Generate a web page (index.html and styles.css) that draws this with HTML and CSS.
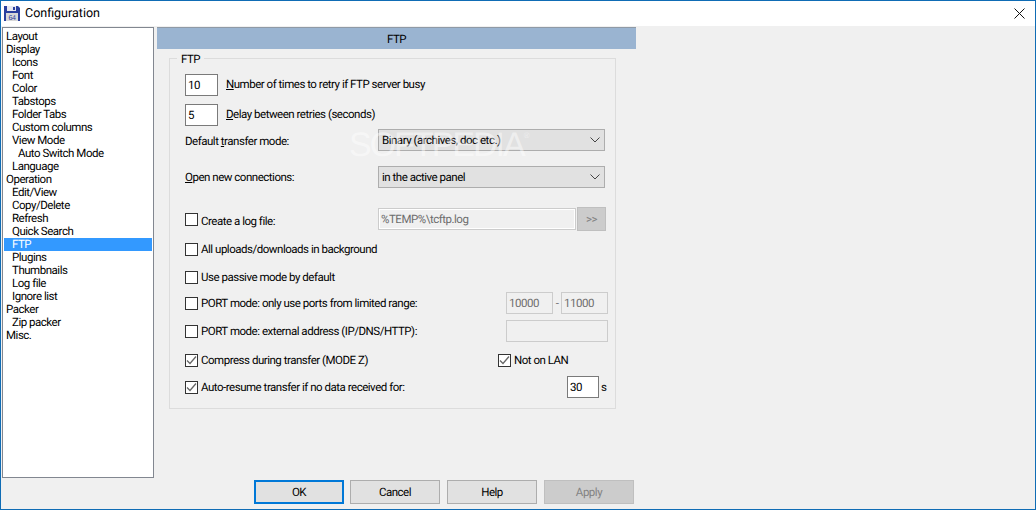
FILE: index.html
```html
<!DOCTYPE html>
<html>
<head>
<meta charset="utf-8">
<title>Configuration</title>
<link rel="stylesheet" href="styles.css">
</head>
<body>
<div class="window">
  <div class="titlebar">
    <svg class="appicon" width="16" height="16" viewBox="0 0 16 16">
      <path d="M0 1h14l2 2v13H0z" fill="#2a3f9e"/>
      <rect x="3" y="1" width="9" height="5" fill="#e8e8f0"/>
      <rect x="9" y="2" width="2" height="3" fill="#2a3f9e"/>
      <rect x="2" y="8" width="12" height="8" fill="#d8d8d8"/>
      <text x="8" y="15" font-size="7" text-anchor="middle" fill="#2a3f9e" font-family="Liberation Sans">64</text>
    </svg>
    <span class="title">Configuration</span>
    <svg class="close" width="11" height="11" viewBox="0 0 11 11"><path d="M.5.5l10 10M10.500.5l-10 10" stroke="#111" stroke-width="1" fill="none"/></svg>
  </div>
  <div class="content">
    <ul class="tree">
      <li>Layout</li>
      <li>Display</li>
      <li class="l1">Icons</li>
      <li class="l1">Font</li>
      <li class="l1">Color</li>
      <li class="l1">Tabstops</li>
      <li class="l1">Folder Tabs</li>
      <li class="l1">Custom columns</li>
      <li class="l1">View Mode</li>
      <li class="l2">Auto Switch Mode</li>
      <li class="l1">Language</li>
      <li>Operation</li>
      <li class="l1">Edit/View</li>
      <li class="l1">Copy/Delete</li>
      <li class="l1">Refresh</li>
      <li class="l1">Quick Search</li>
      <li class="l1 selected">FTP</li>
      <li class="l1">Plugins</li>
      <li class="l1">Thumbnails</li>
      <li class="l1">Log file</li>
      <li class="l1">Ignore list</li>
      <li>Packer</li>
      <li class="l1">Zip packer</li>
      <li>Misc.</li>
    </ul>
    <div class="pane">
      <div class="header">FTP</div>
      <div class="group">
        <div class="legend">FTP</div>
        <div class="row t0">
          <div class="input num">10</div>
          <span class="numlabel"><u>N</u>umber of times to retry if FTP server busy</span>
        </div>
        <div class="row t8">
          <div class="input num">5</div>
          <span class="numlabel"><u>D</u>elay between retries (seconds)</span>
        </div>
        <div class="row t3">
          <span class="lead nudge">Default <u>t</u>ransfer mode:</span>
          <div class="combo">Binary (archives, doc etc.)<svg class="chev" width="10" height="6" viewBox="0 0 10 6"><path d="M.5.500l4.500 4.500 4.500-4.500" stroke="#444" fill="none"/></svg></div>
        </div>
        <div class="row t15">
          <span class="lead"><u>O</u>pen new connections:</span>
          <div class="combo">in the active panel<svg class="chev" width="10" height="6" viewBox="0 0 10 6"><path d="M.5.500l4.500 4.500 4.500-4.500" stroke="#444" fill="none"/></svg></div>
        </div>
        <div class="row t20">
          <label class="check lead"><span class="box"></span><span class="low">Create a log file:</span></label>
          <div class="input off logfile">%TEMP%\tcftp.log</div>
          <div class="browse">&gt;&gt;</div>
        </div>
        <div class="row t8"><label class="check"><span class="box"></span>All uploads/downloads in background</label></div>
        <div class="row t6"><label class="check"><span class="box"></span>Use passive mode by default</label></div>
        <div class="row t4">
          <label class="check wide"><span class="box"></span>PORT mode: only use ports from limited range:</label>
          <div class="input off port">10000</div>
          <span class="dash">-</span>
          <div class="input off port">11000</div>
        </div>
        <div class="row t6">
          <label class="check wide"><span class="box"></span>PORT mode: external address (IP/DNS/HTTP):</label>
          <div class="input off address"></div>
        </div>
        <div class="row t7">
          <label class="check mid"><span class="box on"><svg width="11" height="11" viewBox="0 0 11 11"><path d="M1 5.500l3 3 6-7" stroke="#666" stroke-width="1.300" fill="none"/></svg></span>Compress during transfer (MODE Z)</label>
          <label class="check"><span class="box on"><svg width="11" height="11" viewBox="0 0 11 11"><path d="M1 5.500l3 3 6-7" stroke="#666" stroke-width="1.300" fill="none"/></svg></span>Not on LAN</label>
        </div>
        <div class="row t5">
          <label class="check long"><span class="box on"><svg width="11" height="11" viewBox="0 0 11 11"><path d="M1 5.500l3 3 6-7" stroke="#666" stroke-width="1.300" fill="none"/></svg></span>Auto-resume transfer if no data received for:</label>
          <div class="input secs">30</div>
          <span class="unit">s</span>
        </div>
      </div>
      <div class="mark">SOFTPEDIA<span class="reg">®</span></div>
    </div>
  </div>
  <div class="buttons">
    <div class="btn default">OK</div>
    <div class="btn">Cancel</div>
    <div class="btn">Help</div>
    <div class="btn disabled">Apply</div>
  </div>
</div>
</body>
</html>
```
FILE: styles.css
```css
* { box-sizing: border-box; }
html, body { margin: 0; padding: 0; }
body {
  width: 1036px;
  height: 510px;
  overflow: hidden;
  font-family: Roboto, "Liberation Sans", Arial, sans-serif;
  font-size: 11.500px;
  letter-spacing: -0.480px;
  text-rendering: geometricPrecision;
  color: #000;
}
.window {
  width: 1036px;
  height: 510px;
  background: #f0f0f0;
  border: 1px solid #0f6cb5;
  display: flex;
  flex-direction: column;
}
.titlebar {
  height: 25px;
  background: #fff;
  display: flex;
  align-items: center;
  padding: 0 10px 1px 3px;
  flex: none;
}
.appicon { margin-right: 5px; }
.title { font-size: 12.500px; letter-spacing: 0; flex: 1; }
.content {
  display: flex;
  flex: none;
  height: 451px;
  padding: 1px 0 0 1px;
}
.tree {
  list-style: none;
  margin: 0;
  padding: 2px 1px;
  width: 152px;
  height: 451px;
  background: #fff;
  border: 1px solid #828790;
  flex: none;
}
.tree li {
  height: 13px;
  line-height: 13px;
  padding-left: 2px;
  white-space: nowrap;
}
.tree .l1 { padding-left: 8px; }
.tree .l2 { padding-left: 14px; }
.tree .selected { background: #3399ff; color: #fff; }
.pane {
  position: relative;
  margin-left: 3px;
  width: 479px;
}
.header {
  height: 22px;
  background: #9ab4d1;
  border-top: 1px solid #8f9aa6;
  text-align: center;
  line-height: 22px;
}
.group {
  position: relative;
  margin: 9px 0 0 12px;
  width: 447px;
  height: 351px;
  border: 1px solid #dcdcdc;
  padding: 15px 0 0 15px;
}
.legend {
  position: absolute;
  top: -7px;
  left: 7px;
  padding: 0 4px;
  background: #f0f0f0;
  line-height: 14px;
}
.row {
  display: flex;
  align-items: center;
  height: 22px;
  white-space: nowrap;
}
.t0 { margin-top: 0; }
.t3 { margin-top: 3px; }
.t4 { margin-top: 4px; }
.t5 { margin-top: 5px; }
.t6 { margin-top: 6px; }
.t7 { margin-top: 7px; }
.t8 { margin-top: 8px; }
.t15 { margin-top: 15px; }
.t20 { margin-top: 20px; }
.input {
  height: 22px;
  line-height: 20px;
  background: #fff;
  border: 1px solid #7a7a7a;
  padding-left: 2px;
}
.num { width: 33px; }
.numlabel { margin-left: 8px; margin-bottom: 2px; }
.off {
  background: #f0f0f0;
  border: 1px solid #ccc;
  color: #6d6d6d;
}
.lead { width: 193px; flex: none; }
.low { padding-top: 3px; }
.nudge { padding-top: 1px; }
.combo {
  position: relative;
  width: 227px;
  height: 22px;
  line-height: 21px;
  background: #e1e1e1;
  border: 1px solid #adadad;
  padding-left: 3px;
}
.chev { position: absolute; right: 4px; top: 7px; }
.logfile { width: 198px; outline: 1px solid #fff; outline-offset: -2px; }
.browse {
  width: 29px;
  height: 24px;
  margin-left: 1px;
  background: #cccccc;
  border: 1px solid #bfbfbf;
  color: #838383;
  text-align: center;
  line-height: 22px;
}
.check { display: flex; align-items: center; }
.box {
  width: 13px;
  height: 13px;
  flex: none;
  background: #fff;
  border: 1px solid #333;
  margin-right: 3px;
  display: flex;
  align-items: center;
  justify-content: center;
}
.wide { width: 321px; flex: none; }
.port { width: 47px; }
.dash { width: 8px; text-align: center; color: #777; }
.address { width: 102px; }
.mid { width: 313px; flex: none; }
.long { width: 382px; flex: none; }
.secs { width: 32px; }
.unit { margin-left: 2px; }
.mark {
  position: absolute;
  left: 192px;
  top: 89px;
  font-family: "Liberation Sans", Arial, sans-serif;
  font-size: 34px;
  line-height: 40px;
  letter-spacing: -2px;
  color: rgba(255, 255, 255, 0.45);
  pointer-events: none;
  white-space: nowrap;
}
.reg { font-size: 8px; vertical-align: 18px; letter-spacing: 0; }
.buttons {
  display: flex;
  gap: 7px;
  padding: 3px 0 0 253px;
}
.btn {
  width: 90px;
  height: 24px;
  line-height: 22px;
  text-align: center;
  background: #e1e1e1;
  border: 1px solid #adadad;
}
.btn.default { border: 2px solid #0078d7; line-height: 20px; margin-right: -1px; }
.btn.disabled { background: #cccccc; border-color: #bfbfbf; color: #838383; }
```
